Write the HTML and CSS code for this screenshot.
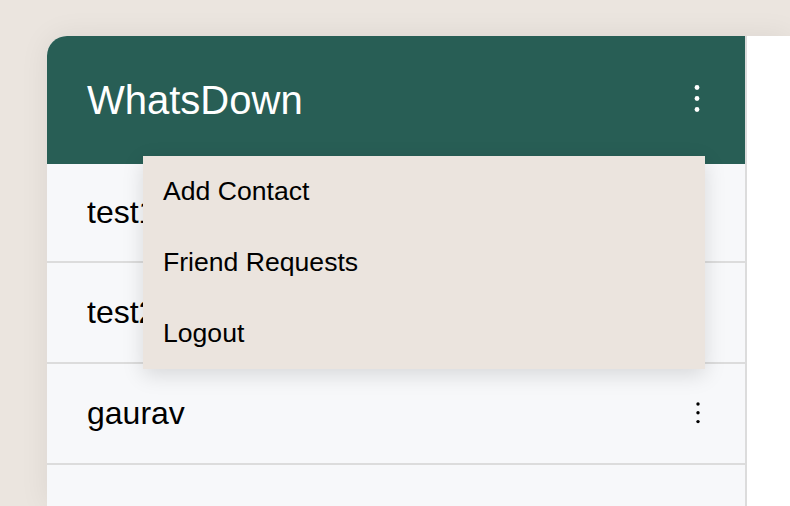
FILE: index.html
```html
<!DOCTYPE html>
<html lang="en">
<head>
<meta charset="utf-8">
<title>WhatsDown</title>
<link rel="stylesheet" href="styles.css">
</head>
<body>
<div class="app">
  <aside class="sidebar">
    <header class="topbar">
      <h1 class="brand">WhatsDown</h1>
      <button class="menu-btn" aria-label="Menu">
        <svg width="24" height="30" viewBox="0 0 24 30"><circle cx="12" cy="2.5" r="2.4" fill="#fff"/><circle cx="12" cy="13.5" r="2.4" fill="#fff"/><circle cx="12" cy="24.5" r="2.4" fill="#fff"/></svg>
      </button>
    </header>
    <ul class="contacts">
      <li class="contact"><span>test1</span></li>
      <li class="contact"><span>test2</span></li>
      <li class="contact"><span>gaurav</span>
        <button class="row-btn" aria-label="Options">
          <svg width="24" height="24" viewBox="0 0 24 24"><circle cx="12" cy="2" r="1.7" fill="#000"/><circle cx="12" cy="10.7" r="1.7" fill="#000"/><circle cx="12" cy="19.6" r="1.7" fill="#000"/></svg>
        </button>
      </li>
    </ul>
    <div class="dropdown">
      <div class="dropdown-item">Add Contact</div>
      <div class="dropdown-item">Friend Requests</div>
      <div class="dropdown-item">Logout</div>
    </div>
  </aside>
  <main class="chat"></main>
</div>
</body>
</html>
```
FILE: styles.css
```css
html, body {
  margin: 0;
  padding: 0;
  height: 100%;
  overflow: hidden;
}
body {
  background: #ebe5df;
  font-family: "Liberation Sans", Arial, sans-serif;
  padding: 36px 0 0 47px;
  box-sizing: border-box;
}
.app {
  display: flex;
  width: 100%;
  height: 100%;
  border-top-left-radius: 20px;
  box-shadow: 0 0 30px rgba(0, 0, 0, 0.07);
}
.sidebar {
  position: relative;
  width: 698px;
  flex: none;
  border-right: 2px solid #dcdcdc;
  background: #f7f8fa;
  border-top-left-radius: 20px;
  display: flex;
  flex-direction: column;
}
.topbar {
  height: 128px;
  flex: none;
  background: #285e55;
  border-top-left-radius: 20px;
  display: flex;
  align-items: center;
  justify-content: space-between;
  padding: 0 36px 0 40px;
  box-sizing: border-box;
}
.brand {
  margin: 0;
  color: #fff;
  font-size: 40px;
  font-weight: normal;
  line-height: 1;
}
.menu-btn, .row-btn {
  background: none;
  border: 0;
  padding: 0;
  display: flex;
}
.menu-btn svg, .row-btn svg { display: block; }
.contacts {
  list-style: none;
  margin: 0;
  padding: 0;
}
.contact {
  height: 99px;
  border-bottom: 2px solid #dcdcdc;
  display: flex;
  align-items: center;
  justify-content: space-between;
  padding: 0 35px 0 40px;
  font-size: 32px;
  color: #000;
}
.contact:first-child { height: 97px; }
.chat {
  flex: 1;
  background: #fff;
}
.dropdown {
  position: absolute;
  left: 96px;
  top: 120px;
  width: 562px;
  background: #ebe4de;
  box-shadow: 0 6px 20px rgba(0, 0, 0, 0.13);
}
.dropdown-item {
  height: 71px;
  display: flex;
  align-items: center;
  padding-left: 20px;
  font-size: 26.6px;
  color: #000;
}
```
